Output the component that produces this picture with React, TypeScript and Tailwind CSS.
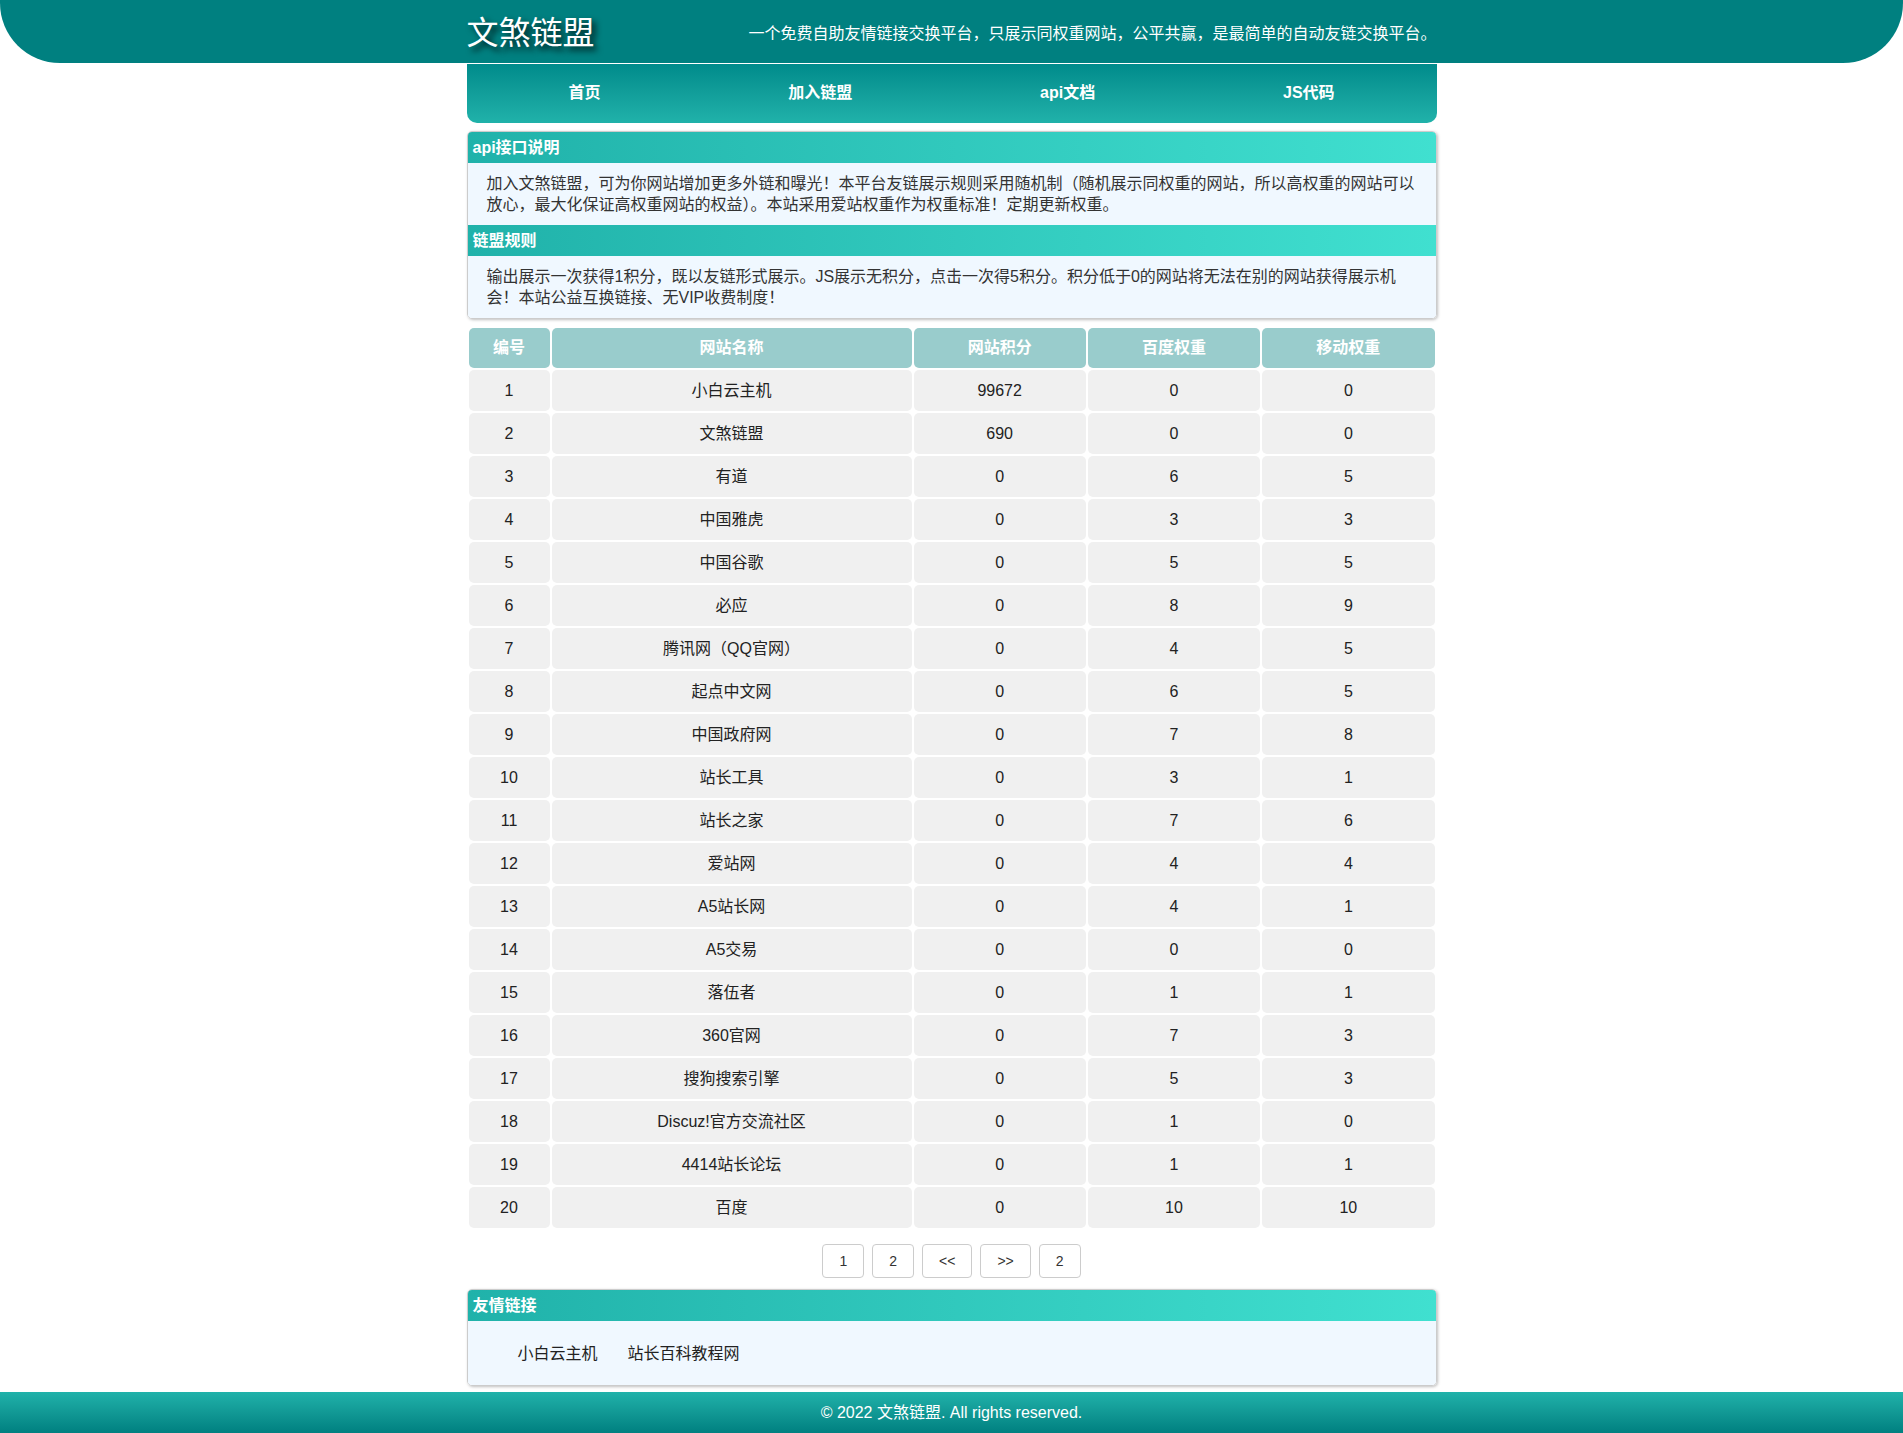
const rows = [
  [1, '小白云主机', 99672, 0, 0],
  [2, '文煞链盟', 690, 0, 0],
  [3, '有道', 0, 6, 5],
  [4, '中国雅虎', 0, 3, 3],
  [5, '中国谷歌', 0, 5, 5],
  [6, '必应', 0, 8, 9],
  [7, '腾讯网（QQ官网）', 0, 4, 5],
  [8, '起点中文网', 0, 6, 5],
  [9, '中国政府网', 0, 7, 8],
  [10, '站长工具', 0, 3, 1],
  [11, '站长之家', 0, 7, 6],
  [12, '爱站网', 0, 4, 4],
  [13, 'A5站长网', 0, 4, 1],
  [14, 'A5交易', 0, 0, 0],
  [15, '落伍者', 0, 1, 1],
  [16, '360官网', 0, 7, 3],
  [17, '搜狗搜索引擎', 0, 5, 3],
  [18, 'Discuz!官方交流社区', 0, 1, 0],
  [19, '4414站长论坛', 0, 1, 1],
  [20, '百度', 0, 10, 10],
];

const navItems = ['首页', '加入链盟', 'api文档', 'JS代码'];
const pages = ['1', '2', '<<', '>>', '2'];

function SectionTitle({ children }: { children: React.ReactNode }) {
  return (
    <div className="h-[31px] bg-linear-to-r from-[#20b2aa] to-[#40e0d0] pl-[5px] text-[16px] leading-[32px] font-bold text-white">
      {children}
    </div>
  );
}

export default function App() {
  return (
    <div className="min-h-[1433px] bg-white font-['Liberation_Sans','Noto_Sans_CJK_SC',sans-serif] text-[16px] text-[#333]">
      {/* header */}
      <header className="h-[63px] rounded-b-[60px] bg-[#008080]">
        <div className="mx-auto flex h-full w-[970px] items-center justify-between">
          <h1 className="mt-[3px] text-[32px] leading-none font-normal text-white [text-shadow:4px_4px_6px_rgba(0,0,0,0.85)]">
            文煞链盟
          </h1>
          <p className="mt-[4px] text-[16px] text-white">
            一个免费自助友情链接交换平台，只展示同权重网站，公平共赢，是最简单的自动友链交换平台。
          </p>
        </div>
      </header>

      <nav className="mx-auto mt-px flex h-[59px] w-[970px] items-center justify-around rounded-b-[10px] bg-linear-to-b from-[#008b8b] to-[#20b2aa] px-[8px] pb-[2px]">
        {navItems.map((item) => (
          <a key={item} href="#" className="text-[16px] font-bold text-white">
            {item}
          </a>
        ))}
      </nav>

      {/* api info */}
      <section className="mx-auto mt-[8px] w-[970px] overflow-hidden rounded-[5px] border border-[#ccc] shadow-[1px_1px_3px_rgba(0,0,0,0.25)]">
        <SectionTitle>api接口说明</SectionTitle>
        <div className="bg-[#f0f8ff] px-[19px] py-[10px] leading-[21px] text-[#333]">
          加入文煞链盟，可为你网站增加更多外链和曝光！本平台友链展示规则采用随机制（随机展示同权重的网站，所以高权重的网站可以放心，最大化保证高权重网站的权益）。本站采用爱站权重作为权重标准！定期更新权重。
        </div>
        <SectionTitle>链盟规则</SectionTitle>
        <div className="bg-[#f0f8ff] px-[19px] py-[10px] leading-[21px] text-[#333]">
          输出展示一次获得1积分，既以友链形式展示。JS展示无积分，点击一次得5积分。积分低于0的网站将无法在别的网站获得展示机会！本站公益互换链接、无VIP收费制度！
        </div>
      </section>

      {/* table */}
      <table className="mx-auto mt-[7px] w-[970px] table-fixed border-separate border-spacing-[2px] text-center">
        <thead>
          <tr>
            <th className="h-[40px] w-[81px] rounded-[5px] bg-[#99cccc] font-bold text-white">编号</th>
            <th className="h-[40px] w-[360px] rounded-[5px] bg-[#99cccc] font-bold text-white">网站名称</th>
            <th className="h-[40px] rounded-[5px] bg-[#99cccc] font-bold text-white">网站积分</th>
            <th className="h-[40px] rounded-[5px] bg-[#99cccc] font-bold text-white">百度权重</th>
            <th className="h-[40px] rounded-[5px] bg-[#99cccc] font-bold text-white">移动权重</th>
          </tr>
        </thead>
        <tbody>
          {rows.map((row) => (
            <tr key={row[0]}>
              {row.map((cell, i) => (
                <td key={i} className="h-[41px] rounded-[5px] bg-[#f0f0f0] text-[#222]">
                  {cell}
                </td>
              ))}
            </tr>
          ))}
        </tbody>
      </table>

      {/* pagination */}
      <div className="mt-[14px] flex justify-center gap-[8px]">
        {pages.map((p, i) => (
          <a
            key={i}
            href="#"
            className="flex h-[34px] items-center rounded-[4px] border border-[#ccc] bg-white px-4 text-[14px] text-[#333]"
          >
            {p}
          </a>
        ))}
      </div>

      {/* friend links */}
      <section className="mx-auto mt-[11px] w-[970px] overflow-hidden rounded-[5px] border border-[#ccc] shadow-[1px_1px_3px_rgba(0,0,0,0.25)]">
        <SectionTitle>友情链接</SectionTitle>
        <div className="flex gap-[30px] bg-[#f0f8ff] pt-[22px] pb-[21px] pl-[50px] leading-[21px]">
          <a href="#" className="text-[#222]">小白云主机</a>
          <a href="#" className="text-[#222]">站长百科教程网</a>
        </div>
      </section>

      <footer className="mt-[6px] flex h-[41px] items-center justify-center bg-linear-to-b from-[#20b2aa] to-[#008080] text-white">
        © 2022 文煞链盟. All rights reserved.
      </footer>
    </div>
  );
}
